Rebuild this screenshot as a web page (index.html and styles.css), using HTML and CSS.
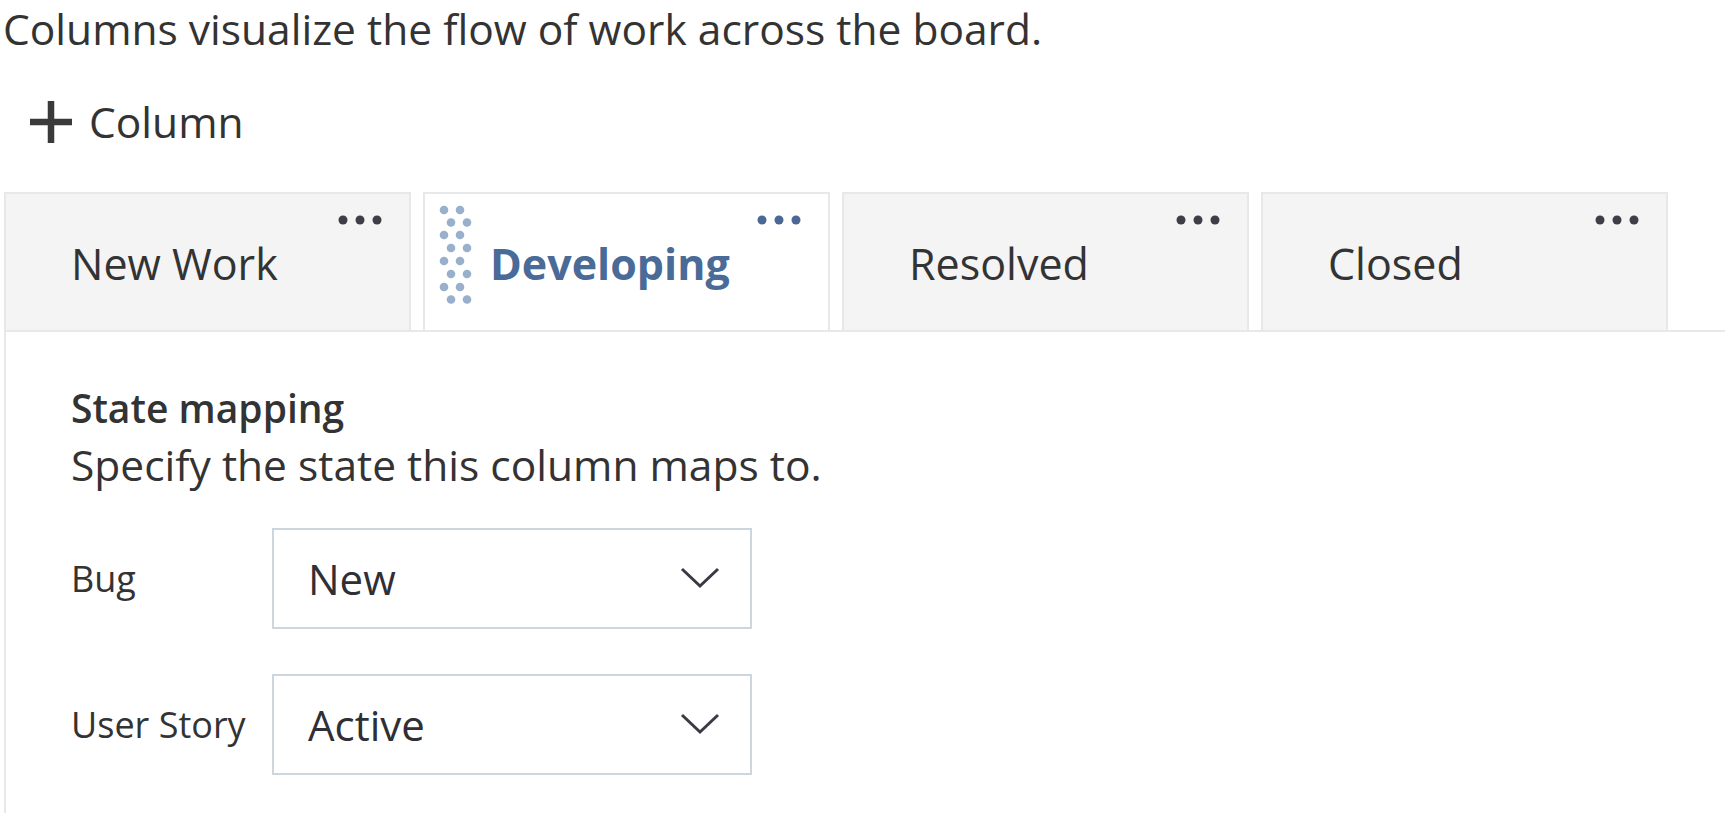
FILE: index.html
```html
<!DOCTYPE html>
<html lang="en">
<head>
<meta charset="utf-8">
<title>Columns</title>
<link rel="stylesheet" href="styles.css">
</head>
<body>
<div class="page">
  <p class="intro">Columns visualize the flow of work across the board.</p>
  <div class="add-col">
    <svg class="plus" width="46" height="46" viewBox="0 0 46 46"><path d="M23 2V44M2 23H44" stroke="#3a3a3a" stroke-width="6.5" fill="none"/></svg>
    <span>Column</span>
  </div>
  <div class="tabs">
    <div class="tab">
      <span class="tab-label">New Work</span>
      <svg class="more" width="44" height="10" viewBox="0 0 44 10"><circle cx="5" cy="5" r="4.5" fill="#3e3e46"/><circle cx="22" cy="5" r="4.5" fill="#3e3e46"/><circle cx="39" cy="5" r="4.5" fill="#3e3e46"/></svg>
    </div>
    <div class="tab selected">
      <svg class="grip" width="34" height="100" viewBox="0 0 34 100">
        <g fill="#98b0cc">
          <circle cx="5" cy="5" r="4.3"/><circle cx="21" cy="5" r="4.3"/>
          <circle cx="12" cy="17.5" r="4.3"/><circle cx="28" cy="17.5" r="4.3"/>
          <circle cx="5" cy="30" r="4.3"/><circle cx="21" cy="30" r="4.3"/>
          <circle cx="12" cy="43" r="4.3"/><circle cx="28" cy="43" r="4.3"/>
          <circle cx="5" cy="56" r="4.3"/><circle cx="21" cy="56" r="4.3"/>
          <circle cx="12" cy="69" r="4.3"/><circle cx="28" cy="69" r="4.3"/>
          <circle cx="5" cy="82" r="4.3"/><circle cx="21" cy="82" r="4.3"/>
          <circle cx="12" cy="94.5" r="4.3"/><circle cx="28" cy="94.5" r="4.3"/>
        </g>
      </svg>
      <span class="tab-label">Developing</span>
      <svg class="more" width="44" height="10" viewBox="0 0 44 10"><circle cx="5" cy="5" r="4.5" fill="#4a6796"/><circle cx="22" cy="5" r="4.5" fill="#4a6796"/><circle cx="39" cy="5" r="4.5" fill="#4a6796"/></svg>
    </div>
    <div class="tab">
      <span class="tab-label">Resolved</span>
      <svg class="more" width="44" height="10" viewBox="0 0 44 10"><circle cx="5" cy="5" r="4.5" fill="#3e3e46"/><circle cx="22" cy="5" r="4.5" fill="#3e3e46"/><circle cx="39" cy="5" r="4.5" fill="#3e3e46"/></svg>
    </div>
    <div class="tab">
      <span class="tab-label">Closed</span>
      <svg class="more" width="44" height="10" viewBox="0 0 44 10"><circle cx="5" cy="5" r="4.5" fill="#3e3e46"/><circle cx="22" cy="5" r="4.5" fill="#3e3e46"/><circle cx="39" cy="5" r="4.5" fill="#3e3e46"/></svg>
    </div>
  </div>
  <div class="panel">
    <h3 class="panel-title">State mapping</h3>
    <p class="panel-desc">Specify the state this column maps to.</p>
    <div class="field first">
      <span class="field-label">Bug</span>
      <div class="select">
        <span>New</span>
        <svg class="chev" width="40" height="22" viewBox="0 0 40 22"><path d="M2 2L20 19L38 2" stroke="#3a3a44" stroke-width="3" fill="none"/></svg>
      </div>
    </div>
    <div class="field">
      <span class="field-label">User Story</span>
      <div class="select">
        <span>Active</span>
        <svg class="chev" width="40" height="22" viewBox="0 0 40 22"><path d="M2 2L20 19L38 2" stroke="#3a3a44" stroke-width="3" fill="none"/></svg>
      </div>
    </div>
  </div>
</div>
</body>
</html>
```

FILE: styles.css
```css
* { box-sizing: border-box; }
html, body { margin: 0; padding: 0; background: #fff; }
body {
  font-family: "Open Sans", "Noto Sans", sans-serif;
  color: #333;
  overflow: hidden;
}
.page {
  width: 1725px;
  height: 813px;
  padding: 0 0 0 3px;
}
.intro {
  margin: 0;
  font-size: 42.5px;
  line-height: 58px;
}
.add-col {
  display: flex;
  align-items: center;
  margin-top: 41px;
  padding-left: 25px;
  height: 46px;
  font-size: 42.5px;
  line-height: 46px;
}
.add-col .plus { margin-right: 15px; }
.tabs {
  display: flex;
  gap: 12px;
  margin-top: 47px;
  padding-left: 1px;
}
.tab {
  position: relative;
  width: 407px;
  height: 138px;
  background: #f4f4f4;
  border: 2px solid #e8e8e8;
  border-bottom: none;
  padding: 46px 0 0 65px;
}
.tab.selected { background: #fff; }
.tab-label {
  font-size: 43px;
  line-height: 48px;
  color: #333;
}
.tab.selected .tab-label {
  font-weight: 700;
  color: #4a6a98;
}
.more {
  position: absolute;
  right: 27px;
  top: 21px;
}
.grip {
  position: absolute;
  left: 14px;
  top: 11px;
}
.panel {
  border-top: 2px solid #e8e8e8;
  border-left: 2px solid #e8e8e8;
  margin-left: 1px;
  height: 483px;
  padding: 48px 0 0 65px;
}
.panel-title {
  margin: 0;
  font-size: 39px;
  font-weight: 600;
  line-height: 56px;
}
.panel-desc {
  margin: 0;
  font-size: 42.5px;
  line-height: 58px;
}
.field {
  display: flex;
  align-items: center;
  margin-top: 45px;
}
.field.first { margin-top: 34px; }
.field-label {
  width: 201px;
  font-size: 36px;
}
.select {
  width: 480px;
  height: 101px;
  border: 2px solid #cdd6df;
  background: #fff;
  display: flex;
  align-items: center;
  justify-content: space-between;
  padding: 0 30px 0 34px;
  font-size: 42px;
  color: #2f2f35;
}
.chev { margin-top: -2px; }
```
